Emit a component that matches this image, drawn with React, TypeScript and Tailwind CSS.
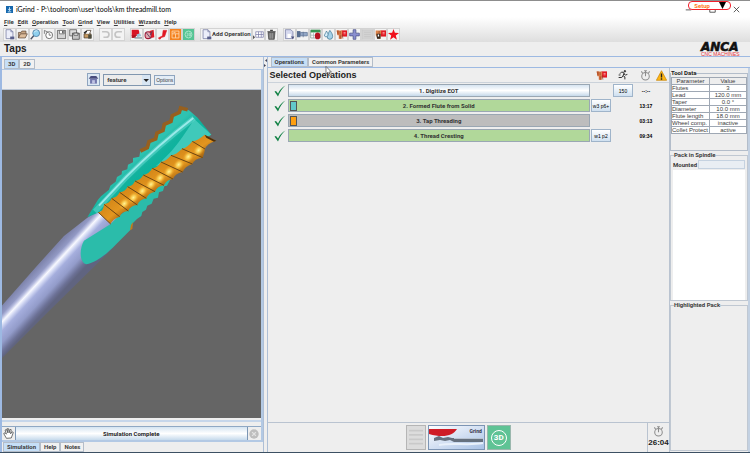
import { useState, type ReactNode } from "react";

const ui = "font-['Roboto','Liberation_Sans',sans-serif] font-bold text-[6px] leading-[8px] text-[#3c3c3c]";

type IconName =
  | "new" | "open" | "search" | "clock" | "save" | "saveAll" | "print" | "undo" | "redo"
  | "book" | "wheel" | "pin" | "machine" | "sim3d" | "table" | "trash" | "doc" | "clamp"
  | "grid" | "drop" | "pack" | "plus" | "blank" | "probe" | "star";

const shapes: Record<IconName, ReactNode> = {
  new: (
    <>
      <path d="M3 1h7l3 3v10H3z" fill="#eceefa" stroke="#6d739c" />
      <path d="M10 1v3h3" stroke="#6d739c" />
      <path d="M9 11h6v4H9z" fill="#5a608c" />
    </>
  ),
  open: (
    <>
      <path d="M2 13V5h4l1-2h6v4" fill="#c8a684" stroke="#5b4534" />
      <path d="M2 13l3-6h10l-3 6z" fill="#ddbd9c" stroke="#5b4534" />
    </>
  ),
  search: (
    <>
      <path d="M1 15l5-6" stroke="#4d5568" strokeWidth="2" />
      <circle cx="9" cy="6" r="5" fill="#8fd0ee" stroke="#3d6e96" />
      <path d="M6 5c1-2 3-3 5-2" stroke="#fff" fill="none" />
    </>
  ),
  clock: (
    <>
      <circle cx="9" cy="9" r="5" fill="#fff" stroke="#6e6e6e" strokeWidth="1.4" />
      <path d="M2 2l6 3M9 6v3h3M2 2v5" fill="none" stroke="#6e6e6e" strokeWidth="1.2" />
    </>
  ),
  save: (
    <>
      <path d="M2 2h12v12H2z" fill="#d3d3d3" stroke="#444" />
      <path d="M5 2h7v5H5z" fill="#fff" stroke="#555" />
      <path d="M9 3h2v3H9z" fill="#444" />
    </>
  ),
  saveAll: (
    <>
      <path d="M1 1h10v9H1z" fill="#ddd" stroke="#444" />
      <path d="M5 6h10v9H5z" fill="#c5c5c5" stroke="#333" />
      <path d="M7 6h6v3H7z" fill="#fff" stroke="#333" />
    </>
  ),
  print: (
    <>
      <path d="M3 7h10v6H3z" fill="#c59a64" stroke="#443526" />
      <path d="M5 7l2-5h6l-2 5" fill="#fff" stroke="#443526" />
      <path d="M9 8h5v6H9z" fill="#4a4a3a" />
      <path d="M3 6l4-3" stroke="#222" strokeWidth="2" />
    </>
  ),
  undo: <path d="M3 4h6a4 4 0 0 1 0 8H5" fill="none" stroke="#c4c4c4" strokeWidth="2.5" />,
  redo: <path d="M13 4H7a4 4 0 0 0 0 8h4" fill="none" stroke="#c4c4c4" strokeWidth="2.5" />,
  book: (
    <>
      <path d="M1 1h10l1 3v6H1z" fill="#d81424" />
      <path d="M1 9h6v4H1z" fill="#b01420" />
      <path d="M8 8l5-2 2 4-6 2z" fill="#9cc3d8" />
      <path d="M5 13h11" stroke="#8a9aa2" strokeWidth="2" />
    </>
  ),
  wheel: (
    <>
      <path d="M8 3l6-2 1 11-5 1z" fill="#df1a25" />
      <ellipse cx="6" cy="9" rx="4.5" ry="5" fill="#e4a6b0" stroke="#a01a38" strokeWidth="1.5" />
      <path d="M3 5l7 9M12 3l-3 6" stroke="#524a62" strokeWidth="1.3" />
    </>
  ),
  pin: <path d="M9 2h5l-3 9-4 1-3 3-2-2 6-3z" fill="#e01822" stroke="#e01822" />,
  machine: (
    <>
      <path d="M0 0h16v16H0z" fill="#f4821f" />
      <path d="M3 3h10v10H3zM3 7h10M8 7v6M5 5h3" fill="none" stroke="#ffd9b4" strokeWidth="1.2" />
    </>
  ),
  sim3d: (
    <>
      <path d="M0 0h16v16H0z" fill="#55c494" />
      <circle cx="8" cy="8" r="5" fill="none" stroke="#b9ecd5" strokeWidth="1.2" />
      <path d="M5 6h2v4H5M9 6h2v4H9z" fill="none" stroke="#b9ecd5" />
    </>
  ),
  table: (
    <>
      <path d="M4 4h11v8H4zM4 8h11M8 4v8M12 4v8" fill="#fff" stroke="#7478a5" />
      <path d="M0 9l3 3-3 3z" fill="#555" />
    </>
  ),
  trash: (
    <>
      <path d="M3 5h10l-1 10H4z" fill="#6d6d6d" stroke="#3e3e3e" />
      <path d="M2 4h12M6 2h4" stroke="#444" strokeWidth="1.6" />
      <path d="M6 6v8M9 6v8" stroke="#bbb" />
    </>
  ),
  doc: (
    <>
      <path d="M2 1h8l3 3v10H2z" fill="#d5d8ee" stroke="#6d739c" />
      <path d="M5 7h5v6H5z" fill="#fff" />
      <path d="M10 11h5l-2 4z" fill="#4d527a" />
    </>
  ),
  clamp: (
    <>
      <path d="M0 3h5v9H0z" fill="#5a6f90" />
      <path d="M5 5h10v5H5z" fill="#93a7c6" stroke="#5a6f90" />
      <path d="M9 4v8" stroke="#5a6f90" />
    </>
  ),
  grid: (
    <>
      <path d="M1 2h14v11H1z" fill="#fff" stroke="#7d8f88" />
      <path d="M1 1h14v4H1z" fill="#369552" />
      <path d="M1 9h8M5 5v8" stroke="#9aa" />
      <ellipse cx="11" cy="10" rx="4" ry="5" fill="#b51422" />
    </>
  ),
  drop: (
    <>
      <path d="M10 2c3 4 4 6 4 9a4 4 0 0 1-8 0c0-3 2-5 4-9z" fill="#a5d1e8" stroke="#36708f" />
      <path d="M5 3c2 3 3 5 2 7a3 3 0 0 1-5 0c0-2 2-4 3-7z" fill="#d6eefa" stroke="#36708f" />
    </>
  ),
  pack: (
    <>
      <path d="M8 2h8v9H8z" fill="#e01822" />
      <path d="M1 2h8v5l-1 2v5H4V9H2z" fill="#e08450" />
      <path d="M1 2h3v6H2zM5 9h3v5H5z" fill="#b8562c" />
      <path d="M6 3v5M9 8l1 6" stroke="#8a4526" />
      <path d="M11 5h3M11 7h3" stroke="#ffc9c9" />
    </>
  ),
  plus: <path d="M6 1h4v5h5v4h-5v5H6v-5H1V6h5z" fill="#8a8fd0" stroke="#454a82" />,
  blank: <path d="M0 1h16v14H0zM3 5h10M3 8h10M3 11h10" fill="#d2d2d2" stroke="#c4c4c4" />,
  probe: (
    <>
      <path d="M8 2h8v9H8z" fill="#e01822" />
      <path d="M1 2h8v5l-1 2v5H4L1 9z" fill="#dc8248" />
      <path d="M6 3v4" stroke="#8a4526" />
      <path d="M2 7h6v7H3z" fill="#33261c" />
      <path d="M4 8h2v3H4z" fill="#fff" />
      <path d="M11 5h3M11 7h3" stroke="#ffc9c9" />
    </>
  ),
  star: <path d="M8 0l2 5.500 6 .3-4.700 3.700L13 15.500 8 12l-5 3.500 1.700-6L0 5.800l6-.3z" fill="#f0101c" />,
};

function Icon({ name }: { name: IconName }) {
  return (
    <svg viewBox="0 0 16 16" className="size-[11px] shrink-0" fill="none" aria-hidden="true">
      {shapes[name]}
    </svg>
  );
}

function ToolGroup({ names }: { names: IconName[] }) {
  return (
    <div className="flex">
      {names.map((n) => (
        <button
          key={n}
          aria-label={n}
          className="flex h-[13px] w-[13px] items-center justify-center border border-[#d3d3d3] bg-[#f3f3f3]"
        >
          <Icon name={n} />
        </button>
      ))}
    </div>
  );
}

function Stopwatch() {
  return (
    <svg viewBox="0 0 16 16" className="size-[11px]" fill="none" stroke="#8c8c8c" strokeWidth="1.500" aria-hidden="true">
      <circle cx="8" cy="9" r="5.500" />
      <path d="M8 1v8M6 1h4M2 2l2 3M14 2l-2 3" />
    </svg>
  );
}

// Crest and root points of the threads, walking up the tool.
const threads = [
  [298, 370, 335, 405], [315, 346, 362, 383], [338, 328, 388, 366], [362, 310, 415, 348],
  [386, 293, 442, 328], [408, 276, 468, 308], [433, 258, 495, 289], [460, 238, 522, 270],
  [486, 219, 551, 249], [516, 199, 580, 225], [549, 179, 611, 206], [580, 157, 618, 180],
  [617, 137, 650, 155],
];

function threadPath(i: number) {
  const [ax, ay, bx, by] = threads[i];
  const [cx, cy, dx, dy] = threads[i + 1];
  return `M${ax} ${ay} Q${ax + 16} ${ay - 2} ${cx} ${cy} L${dx} ${dy} Q${bx + 6} ${by - 16} ${bx} ${by} Z`;
}

function ToolView() {
  return (
    <svg
      viewBox="3 91 259 328"
      preserveAspectRatio="xMinYMin slice"
      className="min-h-0 w-full flex-1 bg-[#656565]"
      role="img"
      aria-label="Tool simulation"
    >
      <defs>
        <linearGradient id="shank" gradientUnits="userSpaceOnUse" x1="4" y1="305" x2="30" y2="329">
          <stop offset="0" stopColor="#7e84ac" />
          <stop offset=".17" stopColor="#9299c4" />
          <stop offset=".24" stopColor="#b8bde0" />
          <stop offset=".32" stopColor="#f8f9ff" />
          <stop offset=".4" stopColor="#d0d6f2" />
          <stop offset=".5" stopColor="#a5aedd" />
          <stop offset=".72" stopColor="#939cca" />
          <stop offset=".9" stopColor="#6c7196" />
          <stop offset="1" stopColor="#606480" />
        </linearGradient>
        <linearGradient id="flute" gradientUnits="userSpaceOnUse" x1="390" y1="230" x2="460" y2="310">
          <stop offset="0" stopColor="#2fc2b1" />
          <stop offset=".3" stopColor="#12b29e" />
          <stop offset=".6" stopColor="#09b39d" />
          <stop offset="1" stopColor="#2abfae" />
        </linearGradient>
        <linearGradient id="thread" x1="0" y1="0" x2="1" y2="1">
          <stop offset="0" stopColor="#cf8216" />
          <stop offset=".6" stopColor="#e3961f" />
          <stop offset="1" stopColor="#96590d" />
        </linearGradient>
        <radialGradient id="glint">
          <stop offset="0" stopColor="#fff39a" />
          <stop offset=".4" stopColor="#ffdb60" stopOpacity=".75" />
          <stop offset="1" stopColor="#f0a323" stopOpacity="0" />
        </radialGradient>
      </defs>
      <path d="M0 310L37 268 65 237 88 219 100 211 133 225 112 251 50 312 0 362z" fill="url(#shank)" />
      <g transform="translate(0 90) scale(.3333)">
        <path
          d="M265 385L297 332 306 322 330 302 334 290 350 278 354 264 368 256 369 246 385 241 387 227 402 220 402 207 421 203 424 186 445 176 450 158 470 150 474 132 492 124 496 106 516 97 520 80 541 70 545 57 570 64 596 86 637 137 610 150 460 250 320 360 300 370z"
          fill="url(#flute)"
        />
        <path d="M586 90L637 137 610 150 500 222 470 232C520 190 545 155 586 90z" fill="#3fc9ba" />
        <path d="M288 368L382 265Q480 168 585 87" fill="none" stroke="#5fd6cc" strokeWidth="16" strokeOpacity=".6" />
        <path d="M300 350L382 263Q480 166 583 87" fill="none" stroke="#9aeaea" strokeWidth="6" />
        <path
          d="M424 186L445 176 450 158 470 150 474 132 492 124 496 106 516 97 520 80 541 70 545 57 566 62"
          fill="none"
          stroke="#96601f"
          strokeWidth="11"
        />
        <path
          d="M335 405L360 380 520 262 513 274 504 290 496 292 492 306 480 310 477 326 464 329 458 344 445 350 441 362 430 369 427 381 414 390 402 402 397 420 350 467C325 492 295 520 262 526 243 522 239 483 255 455z"
          fill="#2bbcaa"
        />
        <path d="M402 400L400 420 393 424 396 408z" fill="#c77a16" />
        {threads.slice(0, -1).map((_, i) => (
          <path key={i} d={threadPath(i)} fill="url(#thread)" />
        ))}
        {threads.slice(2, 11).map(([, , x, y]) => (
          <ellipse
            key={x}
            cx={x - 12}
            cy={y - 22}
            rx="20"
            ry="15"
            fill="url(#glint)"
            transform={`rotate(-50 ${x - 12} ${y - 22})`}
          />
        ))}
        {threads.slice(0, -1).map(([ax, ay, bx, by]) => (
          <path key={ax} d={`M${ax} ${ay}L${bx} ${by}`} stroke="#6f460f" strokeWidth="3" />
        ))}
        <path d="M617 137L652 155 645 158 622 146z" fill="#4e300c" />
      </g>
    </svg>
  );
}

function Check() {
  return (
    <svg viewBox="0 0 12 12" className="size-[12px] shrink-0" aria-hidden="true">
      <path d="M0.500 6.500L4 11.500C6 6.500 8.500 3 11.500 0.500 8 2.500 5.500 5 4 8.500L2 6z" fill="#148347" />
    </svg>
  );
}

const operations = [
  { name: "1. Digitize EOT", bar: "bg-linear-to-b from-[#d6e4f1] via-white to-[#c6d9ea]", chip: "", pack: "", tool: "150", time: "--:--" },
  { name: "2. Formed Flute from Solid", bar: "bg-[#b1d89a]", chip: "bg-[#62c9cb]", pack: "w3 p6+", tool: "", time: "13:17" },
  { name: "3. Tap Threading", bar: "bg-[#bdbdbd]", chip: "bg-[#ff9f0f]", pack: "", tool: "", time: "03:13" },
  { name: "4. Thread Cresting", bar: "bg-[#b1d89a]", chip: "", pack: "w1 p2", tool: "", time: "09:34" },
];

const toolData = [
  ["Flutes", "3"],
  ["Lead", "120.0 mm"],
  ["Taper", "0.0 °"],
  ["Diameter", "10.0 mm"],
  ["Flute length", "18.0 mm"],
  ["Wheel comp.", "inactive"],
  ["Collet Protect", "active"],
];

const smallButton =
  "flex h-[13px] w-[20px] items-center justify-center border border-[#9fb4ca] bg-linear-to-b from-white to-[#cfe0f0] font-['Liberation_Sans',sans-serif] text-[5px] font-normal whitespace-nowrap text-black";

function Tabs({ items, active, onPick }: { items: string[]; active: string; onPick: (t: string) => void }) {
  return (
    <div role="tablist" className="flex">
      {items.map((t) => (
        <button
          key={t}
          role="tab"
          aria-selected={t === active}
          onClick={() => onPick(t)}
          className={`h-[10px] border border-[#b4bdc9] px-[3px] whitespace-nowrap ${t === active ? "bg-[#c6dff7]" : "bg-[#f1f1f1]"}`}
        >
          {t}
        </button>
      ))}
    </div>
  );
}

function SimulationPanel() {
  const [view, setView] = useState("3D");
  const [tab, setTab] = useState("Simulation");
  return (
    <section className="flex w-[35%] flex-col border-l-2 border-[#9db9e2]">
      <div className="pt-[2px] pl-[2px]">
        <Tabs items={["3D", "2D"]} active={view} onPick={setView} />
      </div>
      <div className="flex flex-1 flex-col border-t border-r-2 border-b-2 border-[#b3c9e4]">
        <div className="flex h-[20px] items-center justify-center gap-[3px] border-b border-[#bcc6d3]">
          <button aria-label="Home" className="flex size-[13px] items-center justify-center border border-[#8fa5bf] bg-[#dce8f4]">
            <svg viewBox="0 0 16 16" className="size-[11px]">
              <path d="M1 7l3-4h8l3 4z" fill="#484c7c" />
              <path d="M3 7h10v7H3z" fill="#7378ad" />
              <path d="M6 9h4v5H6z" fill="#c0c4e4" />
            </svg>
          </button>
          <div className="relative">
            <select
              aria-label="View mode"
              className="h-[12px] w-[48px] appearance-none border border-[#8197af] bg-[#ececec] pl-[3px]"
            >
              <option>feature</option>
            </select>
            <svg viewBox="0 0 8 10" className="pointer-events-none absolute top-px right-px h-[10px] w-[8px] bg-[#d7e5f3]">
              <path d="M1.500 4h5.500L4.200 7z" fill="#222" />
            </svg>
          </div>
          <button className="h-[10px] border border-[#8fa5bf] bg-[#e4edf6] px-px font-['Liberation_Sans',sans-serif] text-[5px] font-normal">
            Options
          </button>
        </div>
        <ToolView />
        <div className="mt-[2px] border-t-2 border-[#c6d6ea] pt-[4px]">
          <div className="flex h-[14px] border-t border-[#8fa8c4]">
            <button aria-label="Pan" className="flex w-[14px] items-center justify-center border-r border-[#7c96b4]">
              <svg viewBox="0 0 16 16" className="size-[11px]" fill="#fff" stroke="#555" strokeWidth="1.200">
                <path d="M5 15L1 8l2-1 2 2L3 3l2-1 2 5-1-6h2l1 6 1-5 2 .5-1 6 2-3 2 1-3 8z" />
              </svg>
            </button>
            <div className="flex flex-1 items-center justify-center bg-linear-to-b from-[#d5e4f1] via-white to-[#c6daec] text-[#222]">
              Simulation Complete
            </div>
            <button aria-label="Stop" className="flex w-[14px] items-center justify-center border-l border-[#7c96b4]">
              <svg viewBox="0 0 16 16" className="size-[10px]">
                <circle cx="8" cy="8" r="7.500" fill="#bdbdbd" />
                <path d="M5 5l6 6M11 5l-6 6" stroke="#e2e2e2" strokeWidth="2" />
              </svg>
            </button>
          </div>
        </div>
      </div>
      <div className="pl-px">
        <Tabs items={["Simulation", "Help", "Notes"]} active={tab} onPick={setTab} />
      </div>
    </section>
  );
}

function OperationList() {
  return (
    <div className="flex flex-1 flex-col border-r border-[#b9c3d0]">
      <div className="flex h-[15px] items-center border-b border-[#cbd2da] pl-[2px]">
        <h2 className="flex-1 font-['Liberation_Sans',sans-serif] text-[9px] leading-[12px] text-[#222]">Selected Operations</h2>
        <div className="flex w-[22px] justify-center"><Icon name="pack" /></div>
        <div className="flex w-[22px] justify-center">
          <svg viewBox="0 0 16 16" className="size-[10px]" fill="none" stroke="#333" strokeWidth="1.600" aria-hidden="true">
            <path d="M3 6l3-3 4 2-2 4 3 2v4M8 9l-2 3H1M9 6l3 2 3-1" />
            <circle cx="11" cy="2" r="1.200" fill="#333" />
            <path d="M1 8h3" />
          </svg>
        </div>
        <div className="flex w-[22px] justify-center"><Stopwatch /></div>
        <svg viewBox="0 0 16 16" className="mr-[2px] size-[11px]" aria-hidden="true">
          <path d="M8 1l7.500 14H.500z" fill="#fdb515" stroke="#c98405" />
          <path d="M8 5v6M8 12v2" stroke="#222" strokeWidth="2" />
        </svg>
      </div>
      <ul className="flex flex-col gap-[2px] pt-px pl-[6px]">
        {operations.map((op) => (
          <li key={op.name} className="flex h-[13px] items-center">
            <Check />
            <button className={`ml-[2px] flex h-[13px] flex-1 items-center border border-[#9aa7b3] text-[#333] ${op.bar}`}>
              <span className={`ml-px h-[10px] w-[7px] ${op.chip && `border border-[#555] ${op.chip}`}`} />
              <span className="flex-1 pr-2">{op.name}</span>
            </button>
            <div className="ml-px w-[22px]">{op.pack && <button className={smallButton}>{op.pack}</button>}</div>
            <div className="w-[22px]">{op.tool && <button className={smallButton}>{op.tool}</button>}</div>
            <span className="w-[34px] pr-[12px] text-center font-['Liberation_Sans',sans-serif] text-[5px] text-black">{op.time}</span>
          </li>
        ))}
      </ul>
      <div className="mt-auto flex h-[30px] items-stretch border-t border-[#b9c3d0]">
        <div className="flex flex-1 items-center justify-center gap-[2px] pl-[2px]">
          <button aria-label="Report" className="h-[25px] w-[20px] border border-[#b5b5b5] bg-[#dcdcdc] p-[2px]">
            <svg viewBox="0 0 16 20" className="size-full" stroke="#c9c9c9" strokeWidth="2">
              <path d="M0 2h16M0 7h16M0 12h16M0 17h16" />
            </svg>
          </button>
          <button className="relative h-[25px] w-[57px] border border-[#7d95b4] bg-linear-to-br from-white to-[#a9c2e6]">
            <svg viewBox="0 0 55 23" className="size-full">
              <path d="M0 3h28C24 10 14 12 0 8z" fill="#cf1c26" />
              <path d="M5 12l5-2 4 2 5-1 4 1h31v4H25l-4-2-5 1-5-1-6 1z" fill="#66717f" />
              <path d="M25 12.500h29" stroke="#b9c4d2" />
              <path d="M10 19c14-3 28 1 44-2" stroke="#e9f1fb" strokeWidth="2" fill="none" />
            </svg>
            <span className="absolute top-px right-[2px] text-[5px] text-[#334]">Grind</span>
          </button>
          <button className="flex h-[25px] w-[24px] items-center justify-center border border-[#9ab7ad] bg-[#5fc395] p-px">
            <span className="flex size-[16px] items-center justify-center rounded-full border border-white text-[8px] text-white">3D</span>
          </button>
        </div>
        <div className="flex w-[22px] flex-col items-center border-l border-[#b9c3d0] pt-[3px]">
          <Stopwatch />
          <span className="font-['Liberation_Sans',sans-serif] text-[8px] leading-[12px] text-[#222]">26:04</span>
        </div>
      </div>
    </div>
  );
}

function ToolSidebar() {
  return (
    <aside className="flex w-[80px] flex-col border-r-2 border-[#c3d1e2] pt-px pb-px">
      <fieldset className="h-[82px] border border-[#b3bdca]">
        <legend className="text-[#222]">Tool Data</legend>
        <table className="w-full table-fixed border-collapse bg-white font-['Liberation_Sans',sans-serif] text-[6px] leading-[6px] font-normal">
          <thead>
            <tr className="bg-[#eeeeee]">
              <th className="w-[38px] border border-[#9fa8b4] p-0 font-normal">Parameter</th>
              <th className="border border-[#9fa8b4] p-0 font-normal">Value</th>
            </tr>
          </thead>
          <tbody>
            {toolData.map(([name, value]) => (
              <tr key={name}>
                <td className="border border-[#9fa8b4] p-0 whitespace-nowrap">{name}</td>
                <td className="border border-[#9fa8b4] p-0 text-center whitespace-nowrap">{value}</td>
              </tr>
            ))}
          </tbody>
        </table>
      </fieldset>
      <fieldset className="h-[150px] min-w-0 border border-[#c0c8d2] px-[2px]">
        <legend className="ml-px">Pack in Spindle</legend>
        <label className="flex h-[11px] items-center gap-px">
          Mounted
          <input readOnly className="h-[9px] w-0 min-w-0 flex-1 border border-[#c5d2e0] bg-[#e9eef3]" />
        </label>
        <div className="h-[130px] bg-white" />
      </fieldset>
      <fieldset className="flex-1 border border-[#c0c8d2] px-[2px]">
        <legend className="ml-px">Highlighted Pack</legend>
      </fieldset>
    </aside>
  );
}

export default function App() {
  const [tab, setTab] = useState("Operations");
  return (
    <div className={`relative flex min-h-screen flex-col border-t border-b border-t-[#8d8d8d] border-b-[#3c5063] bg-[#eeeeee] ${ui}`}>
      <header className="flex h-[16px] items-center bg-white pl-[6px] font-['Lato','Open_Sans',sans-serif] text-[7px] font-normal text-black">
        <svg viewBox="0 0 12 12" className="mr-[3px] size-[7px]" aria-hidden="true">
          <path d="M0 0h12v12H0z" fill="#1567ad" />
          <path d="M6 2v5M4 5l2 3 3-3M3 10h6" stroke="#d5efff" strokeWidth="1.500" fill="none" />
        </svg>
        <h1 className="flex-1">iGrind - P:\toolroom\user\tools\km threadmill.tom</h1>
        <div className="flex items-center gap-[17px] pr-[10px]">
          {["M1 5h7", "M1 1h7v7H1z", "M1 1l7 7M8 1l-7 7"].map((d, i) => (
            <button key={d} aria-label={["Minimize", "Maximize", "Close"][i]}>
              <svg viewBox="0 0 9 9" className="size-[7px]" fill="none" stroke="#333"><path d={d} /></svg>
            </button>
          ))}
        </div>
      </header>
      <div className="absolute top-0 right-[19px] flex h-[9px] w-[43px] items-center justify-end gap-[9px] rounded-[4px] border border-[#f2202c] bg-white pr-[4px] text-[#ff7a22]">
        Setup
        <svg viewBox="0 0 7 7" className="size-[7px]"><path d="M0 0h7L3.500 7z" fill="#000" /></svg>
      </div>

      <div className="bg-linear-to-b from-white to-[#dedede]">
        <nav className="flex h-[9px] items-center gap-[4px] pl-[4px]">
          {["File", "Edit", "Operation", "Tool", "Grind", "View", "Utilities", "Wizards", "Help"].map((m) => (
            <button key={m} className="first-letter:underline">{m}</button>
          ))}
        </nav>
        <div className="flex h-[16px] items-center gap-[5px] pl-[3px]">
          <ToolGroup names={["new", "open", "search", "clock", "save", "saveAll", "print"]} />
          <ToolGroup names={["undo", "redo"]} />
          <ToolGroup names={["book", "wheel", "pin", "machine", "sim3d"]} />
          <div className="flex">
            <button className="flex h-[13px] items-center border border-[#d3d3d3] bg-[#f3f3f3]">
              <Icon name="new" />
              Add Operation
            </button>
            <ToolGroup names={["table", "trash"]} />
          </div>
          <ToolGroup names={["doc", "clamp", "grid", "drop", "pack", "plus", "blank", "probe", "star"]} />
        </div>
      </div>

      <div className="flex h-[15px] items-center justify-between border-b border-[#9db9e2] pr-[8px] pl-[4px]">
        <h2 className="font-['Liberation_Sans',sans-serif] text-[10px] leading-[14px] text-[#222]">Taps</h2>
        <svg viewBox="0 0 42 15" className="h-[15px] w-[42px] overflow-visible">
          <text x="1" y="9" fontFamily="DejaVu Sans" fontSize="12" fontWeight="bold" fontStyle="italic" fill="#111" stroke="#111" strokeWidth=".6">ANCA</text>
          <text x="1" y="14" fontFamily="Liberation Sans" fontSize="5" fontWeight="normal" fill="#e8323c">CNC MACHINES</text>
        </svg>
      </div>

      <main className="flex flex-1">
        <SimulationPanel />
        <div className="w-[5px] border-r border-l border-[#aebfd6]">
          <svg viewBox="0 0 3 8" className="mt-[2px] h-[8px] w-[3px]"><path d="M3 0v3L1 1.500zM0 5v3l2-1.500z" fill="#445" /></svg>
        </div>
        <section className="relative flex flex-1 flex-col">
          <div className="pl-[3px]">
            <Tabs items={["Operations", "Common Parameters"]} active={tab} onPick={setTab} />
          </div>
          <div className="flex flex-1 border-t border-[#9db9e2]">
            <OperationList />
            <ToolSidebar />
          </div>
          <svg viewBox="0 0 8 12" className="pointer-events-none absolute top-[9px] left-[57px] h-[10px] w-[7px]">
            <path d="M1 0.500v9l2-2 1.500 4 1.500-.7-1.500-3.500h3z" fill="#fff" stroke="#444" strokeWidth=".8" />
          </svg>
        </section>
      </main>
    </div>
  );
}
